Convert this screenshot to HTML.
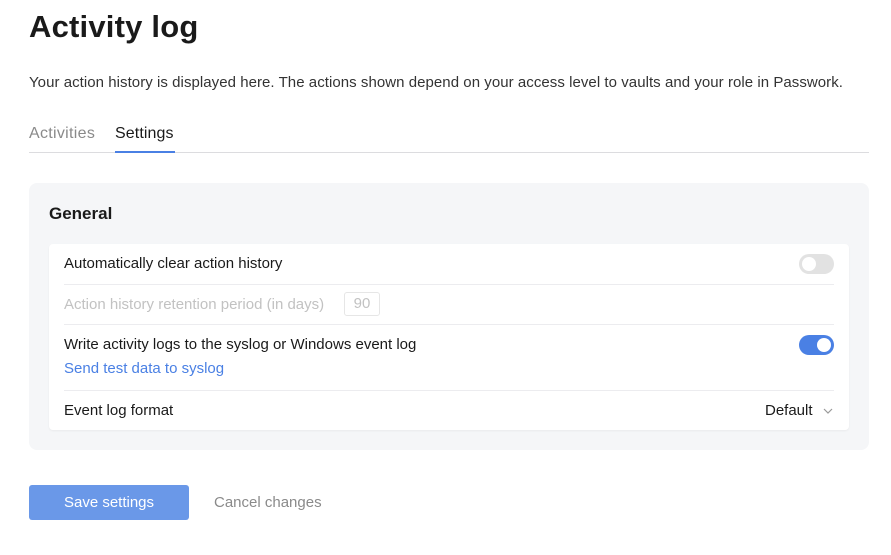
<!DOCTYPE html>
<html><head><style>
body{margin:0;width:891px;height:555px;background:#fff;font-family:"Liberation Sans",sans-serif;color:#1a1a1a;position:relative;overflow:hidden}
.a{position:absolute;white-space:nowrap}
.tog{position:absolute;width:35px;height:20px;border-radius:10px}
.knob{position:absolute;top:3px;width:14px;height:14px;border-radius:50%;background:#fff}
.sep{position:absolute;left:64px;width:770px;height:1px;background:#ececef}
</style></head><body>
<div class="a" style="left:29px;top:9px;font-size:31px;font-weight:bold;letter-spacing:0.2px">Activity log</div>
<div class="a" style="left:29px;top:74px;font-size:15px;color:#333;letter-spacing:0.05px">Your action history is displayed here. The actions shown depend on your access level to vaults and your role in Passwork.</div>
<div class="a" style="left:29px;top:125px;font-size:16px;color:#8a8a8a;letter-spacing:0.3px">Activities</div>
<div class="a" style="left:115px;top:125px;font-size:16px;color:#1a1a1a;letter-spacing:0.1px">Settings</div>
<div class="a" style="left:29px;top:152px;width:840px;height:1px;background:#dcdcdf"></div>
<div class="a" style="left:115px;top:151px;width:60px;height:2px;background:#4a80e4"></div>
<div class="a" style="left:29px;top:183px;width:840px;height:267px;background:#f5f6f8;border-radius:8px"></div>
<div class="a" style="left:49px;top:204px;font-size:17px;font-weight:bold">General</div>
<div class="a" style="left:49px;top:244px;width:800px;height:186px;background:#fff;border-radius:4px;box-shadow:0 1px 2px rgba(0,0,0,0.05)"></div>
<div class="a" style="left:64px;top:255px;font-size:15px">Automatically clear action history</div>
<div class="tog" style="left:799px;top:254px;background:#e2e2e2"><div class="knob" style="left:3px"></div></div>
<div class="sep" style="top:284px"></div>
<div class="a" style="left:64px;top:296px;font-size:15px;color:#c2c2c2">Action history retention period (in days)</div>
<div class="a" style="left:344px;top:292px;width:34px;height:22px;border:1px solid #e6e6e6;border-radius:3px;font-size:15px;color:#c2c2c2;text-align:center;line-height:22px">90</div>
<div class="sep" style="top:324px"></div>
<div class="a" style="left:64px;top:336px;font-size:15px">Write activity logs to the syslog or Windows event log</div>
<div class="tog" style="left:799px;top:335px;background:#4a80e4"><div class="knob" style="left:18px"></div></div>
<div class="a" style="left:64px;top:360px;font-size:15px;color:#4a80e4">Send test data to syslog</div>
<div class="sep" style="top:390px"></div>
<div class="a" style="left:64px;top:402px;font-size:15px">Event log format</div>
<div class="a" style="left:765px;top:402px;font-size:15px">Default</div>
<svg class="a" style="left:823px;top:407px" width="10" height="8"><path d="M1 2 L5 6 L9 2" stroke="#999" fill="none" stroke-width="1.2"/></svg>
<div class="a" style="left:29px;top:485px;width:160px;height:35px;background:#6a98e8;border-radius:3px;color:#fff;font-size:15px;text-align:center;line-height:35px">Save settings</div>
<div class="a" style="left:214px;top:494px;font-size:15px;color:#8a8a8a">Cancel changes</div>
</body></html>
